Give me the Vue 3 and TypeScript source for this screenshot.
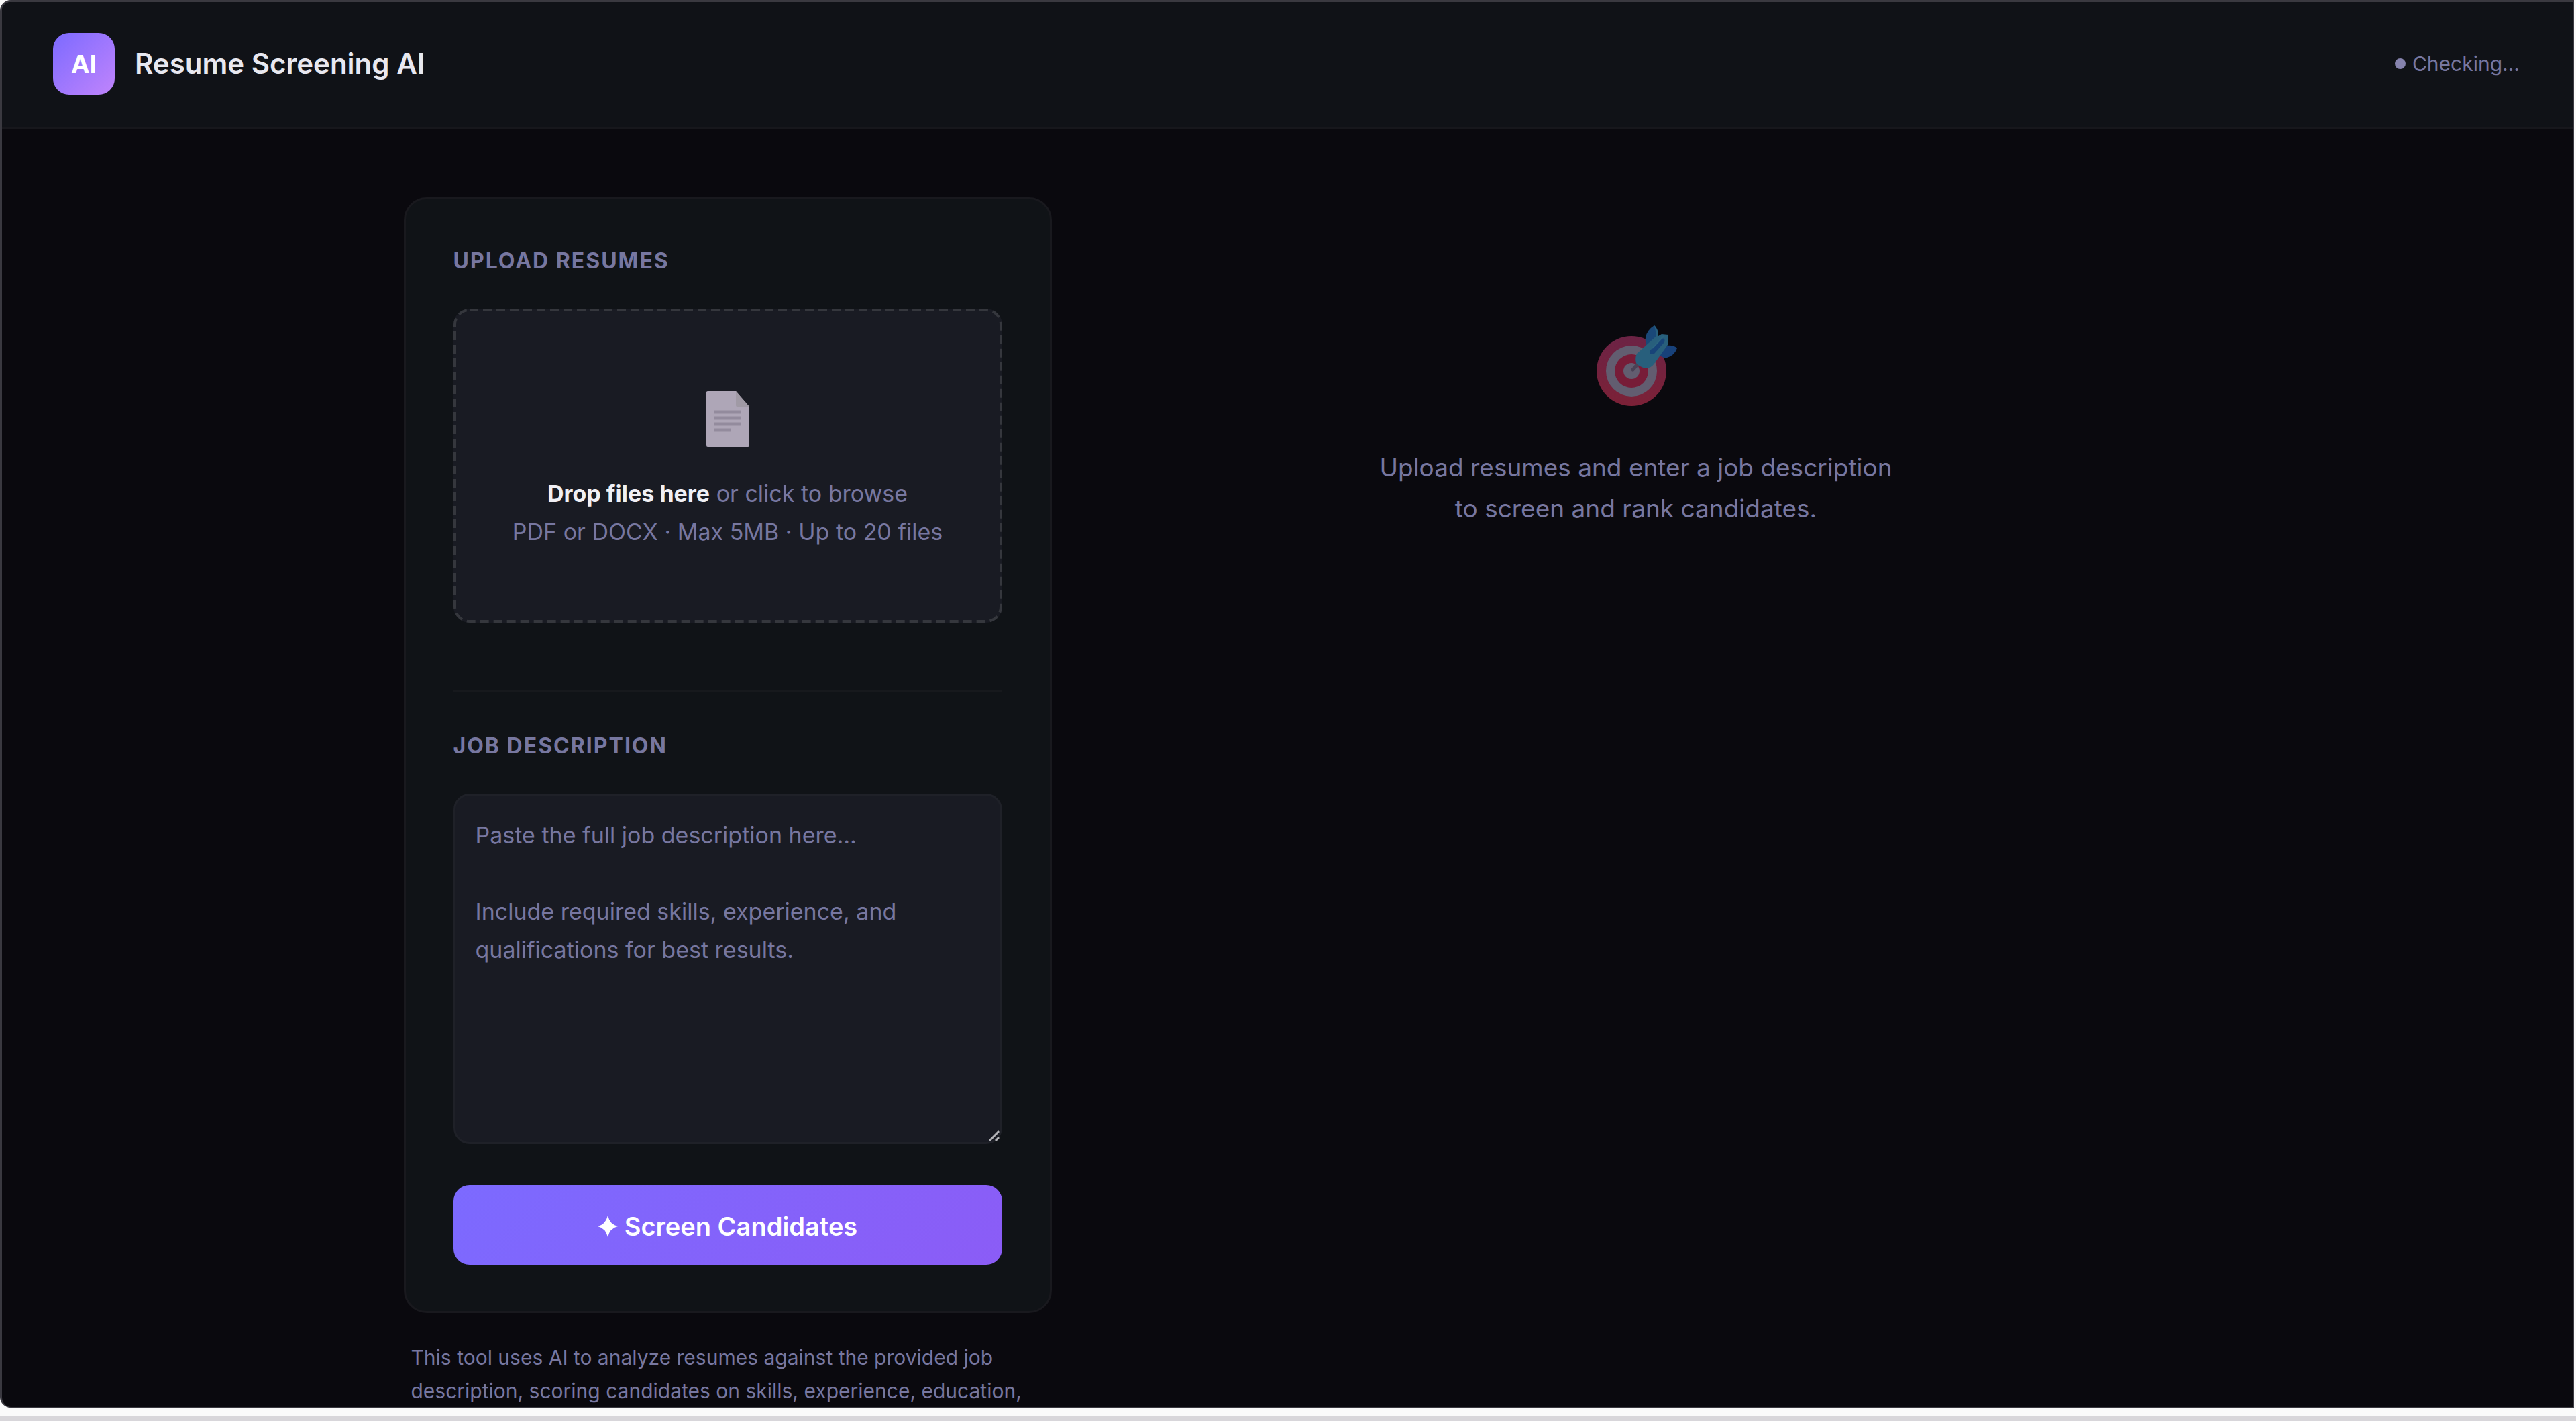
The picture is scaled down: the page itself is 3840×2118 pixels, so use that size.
<script setup lang="ts">
import { ref } from 'vue'

const status = ref<string>('Checking…')
const jobDescription = ref<string>('')
const placeholder: string =
  'Paste the full job description here…\n\nInclude required skills, experience, and qualifications for best results.'
</script>

<template>
  <div class="page">
    <div class="window">
      <header class="topbar">
        <div class="brand">
          <div class="logo">AI</div>
          <h1 class="brand-name">Resume Screening AI</h1>
        </div>
        <div class="status"><span class="dot"></span>{{ status }}</div>
      </header>

      <main class="content">
        <section class="side">
          <form class="card" @submit.prevent>
            <h2 class="section-title">Upload Resumes</h2>
            <label class="dropzone" for="resumes">
              <svg class="dashes" aria-hidden="true">
                <rect class="dash-rect" x="2" y="2" rx="22" ry="22" />
              </svg>
              <input id="resumes" class="file-input" type="file" accept=".pdf,.docx" multiple />
              <svg class="doc-icon" viewBox="0 0 64 83" aria-hidden="true">
                <path d="M2 0H44L64 23V81Q64 83 62 83H2Q0 83 0 81V2Q0 0 2 0Z" fill="#aea6b7" />
                <path d="M44 0L64 23H46Q44 23 44 21Z" fill="#a09aa5" />
                <path d="M12 31H51M12 40H51M12 49H51M12 58H37" stroke="#938b9d" stroke-width="5" fill="none" />
              </svg>
              <span class="drop-text"><strong>Drop files here</strong> or click to browse</span>
              <span class="drop-text">PDF or DOCX · Max 5MB · Up to 20 files</span>
            </label>

            <hr class="divider" />

            <label class="section-title" for="job">Job Description</label>
            <div class="field">
              <textarea id="job" v-model="jobDescription" class="job-input" :placeholder="placeholder"></textarea>
              <svg class="grip" viewBox="0 0 16 16" aria-hidden="true">
                <path d="M1 15L15 1M10 15L15 10" stroke="#b4b4b8" stroke-width="3" fill="none" />
              </svg>
            </div>

            <button class="submit" type="submit">
              <svg class="spark" viewBox="0 0 30 32" aria-hidden="true">
                <path d="M15 0Q18 13 30 16Q18 19 15 32Q12 19 0 16Q12 13 15 0Z" fill="#fff" />
              </svg>
              Screen Candidates
            </button>
          </form>
          <p class="note">
            This tool uses AI to analyze resumes against the provided job description, scoring candidates on skills,
            experience, education,
          </p>
        </section>

        <section class="empty">
          <svg class="target" viewBox="8 9 124 120" aria-hidden="true">
            <defs>
              <linearGradient id="ring" x1="0" y1="0" x2="0" y2="1">
                <stop offset="0" stop-color="#6c2345" />
                <stop offset="1" stop-color="#7c2137" />
              </linearGradient>
            </defs>
            <circle cx="63" cy="77" r="52" fill="url(#ring)" />
            <circle cx="63" cy="77" r="38" fill="#625d70" />
            <circle cx="63" cy="77" r="25" fill="#771c38" />
            <circle cx="63" cy="77" r="12" fill="#625d70" />
            <path d="M65 75L78 60" stroke="#4a4256" stroke-width="5" stroke-linecap="round" />
            <path d="M97 9Q86 16 84 27Q83 33 86 40L100 30L103 20Q101 12 97 9Z" fill="#1a4878" />
            <path d="M131 43Q126 38 116 39L104 52Q108 58 116 57Q127 54 131 43Z" fill="#18417a" />
            <path
              d="M97 9Q103 15 103 25L108 22L118 23L117 38L97 66Q92 73 84 73Q75 71 70 65Q68 57 71 51L100 25Q99 16 97 9Z"
              fill="#285f7c"
            />
            <path d="M108 29Q114 27 112 34L97 51Q90 54 90 47Z" fill="#184479" />
            <path d="M111 25L94 43" stroke="#2b6480" stroke-width="2" />
          </svg>
          <p class="empty-text">Upload resumes and enter a job description<br />to screen and rank candidates.</p>
        </section>
      </main>
    </div>
    <div class="shelf"></div>
  </div>
</template>

<style>
body {
  margin: 0;
  background: #fafafa;
}
</style>

<style scoped>
.page {
  display: flex;
  flex-direction: column;
  gap: 12px;
  height: 100vh;
  padding-right: 3px;
  box-sizing: border-box;
  font-family: 'Inter', 'Liberation Sans', sans-serif;
  color: #7777a0;
}

.window {
  flex: 1;
  min-height: 0;
  overflow: hidden;
  background: #0a090e;
  border: 3px solid #3a3940;
  border-right-width: 1px;
  border-bottom-width: 1px;
  border-radius: 16px 0 0 16px;
}

.shelf {
  flex: none;
  height: 8px;
  margin-right: -3px;
  background: #d8d6da;
}

.topbar {
  display: flex;
  align-items: center;
  justify-content: space-between;
  padding: 46px 80px 48px 76px;
  background: #101217;
  border-bottom: 3px solid #17171c;
}

.brand {
  display: flex;
  align-items: center;
  gap: 30px;
}

.logo {
  display: flex;
  align-items: center;
  justify-content: center;
  width: 92px;
  height: 92px;
  border-radius: 24px;
  background: linear-gradient(135deg, #7c6aff, #c084fc);
  color: #fff;
  font-size: 37px;
  font-weight: 700;
}

.brand-name {
  margin: 0;
  color: #e8e8f0;
  font-size: 42px;
  line-height: 56px;
  font-weight: 600;
}

.status {
  display: flex;
  align-items: center;
  gap: 10px;
  font-size: 30px;
  line-height: 40px;
}

.dot {
  width: 16px;
  height: 16px;
  border-radius: 50%;
  background: #8683ae;
}

.content {
  display: grid;
  grid-template-columns: 966px 1fr;
  gap: 72px;
  max-width: 2636px;
  margin: 0 auto;
  padding-top: 102px;
}

.card {
  display: flex;
  flex-direction: column;
  padding: 72px 71px 69px;
  background: #101317;
  border: 3px solid #19191e;
  border-radius: 34px;
}

.section-title {
  margin: 0 0 51px;
  font-size: 32px;
  line-height: 40px;
  font-weight: 700;
  letter-spacing: 2px;
  text-transform: uppercase;
}

.dropzone {
  position: relative;
  display: flex;
  flex-direction: column;
  align-items: center;
  padding: 123px 24px 107px;
  background: #191b23;
  border-radius: 24px;
  cursor: pointer;
}

.dashes {
  position: absolute;
  inset: 0;
  width: 100%;
  height: 100%;
}

.dash-rect {
  width: calc(100% - 4px);
  height: calc(100% - 4px);
  fill: none;
  stroke: #35373d;
  stroke-width: 4px;
  stroke-dasharray: 13 7;
}

.file-input {
  position: absolute;
  width: 1px;
  height: 1px;
  opacity: 0;
}

.doc-icon {
  width: 64px;
  height: 83px;
  margin-bottom: 41px;
}

.drop-text {
  font-size: 34px;
  line-height: 57px;
}

.drop-text strong {
  color: #f0f0f5;
  font-weight: 700;
}

.divider {
  width: 100%;
  height: 3px;
  margin: 100px 0 61px;
  border: 0;
  background: #17191d;
}

.field {
  position: relative;
  display: flex;
  margin-bottom: 61px;
}

.job-input {
  flex: 1;
  height: 522px;
  padding: 30px;
  box-sizing: border-box;
  resize: none;
  background: #191b23;
  border: 3px solid #1f2128;
  border-radius: 24px;
  outline: none;
  color: #e8e8f0;
  font-family: inherit;
  font-size: 34px;
  line-height: 57px;
}

.job-input::placeholder {
  color: #7777a0;
  opacity: 1;
}

.grip {
  position: absolute;
  right: 4px;
  bottom: 4px;
  width: 16px;
  height: 16px;
}

.submit {
  display: flex;
  align-items: center;
  justify-content: center;
  gap: 10px;
  height: 119px;
  padding: 4px 0 0;
  border: 0;
  border-radius: 24px;
  background: linear-gradient(135deg, #7c6aff, #8b5cf6);
  color: #fff;
  font-family: inherit;
  font-size: 38px;
  font-weight: 600;
}

.spark {
  width: 30px;
  height: 32px;
}

.note {
  margin: 41px 11px 0;
  font-size: 30px;
  line-height: 50px;
}

.empty {
  display: flex;
  flex-direction: column;
  align-items: center;
  padding-top: 191px;
}

.target {
  width: 124px;
  height: 120px;
  margin-bottom: 61px;
}

.empty-text {
  margin: 0;
  font-size: 37px;
  line-height: 61px;
  text-align: center;
}
</style>
